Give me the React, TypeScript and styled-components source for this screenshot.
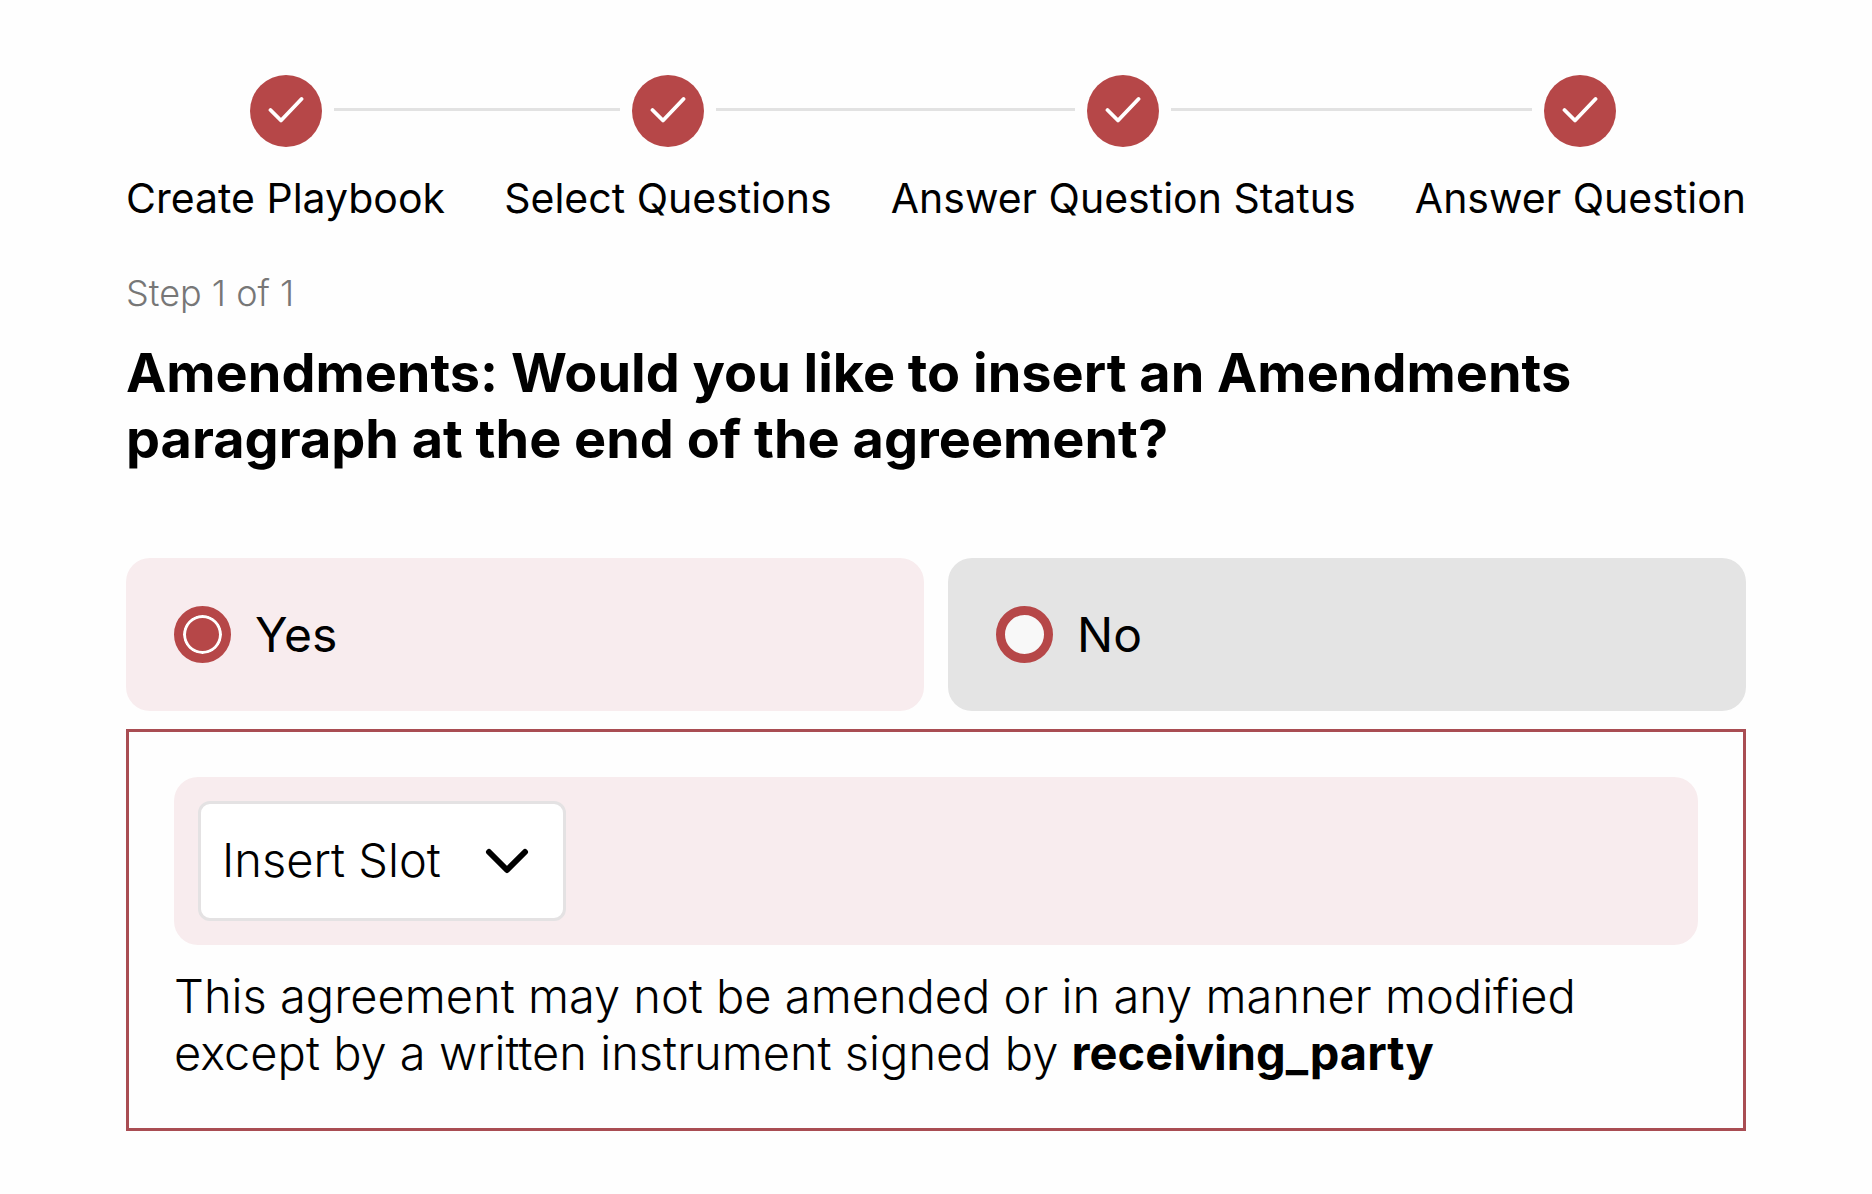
import React, { useState } from "react";
import styled, { createGlobalStyle } from "styled-components";

const red = "#b64748";
const blush = "#f8ecee";

const GlobalStyle = createGlobalStyle`
  *, *::before, *::after { box-sizing: border-box; }
  body {
    margin: 0;
    background: #fefefe;
    color: #000;
    font-family: Inter, "Liberation Sans", sans-serif;
  }
`;

const Page = styled.main`
  display: flex;
  flex-direction: column;
  padding: 75px 126px 63px;
`;

const Stepper = styled.ol`
  display: flex;
  justify-content: space-between;
  gap: 56px;
  margin: 0 0 45px;
  padding: 0;
  list-style: none;
`;

const Step = styled.li`
  display: flex;
  flex-direction: column;
  gap: 24px;
`;

const Track = styled.div`
  display: flex;
  align-items: center;
  gap: 12px;
`;

const Connector = styled.span<{ $side: "left" | "right"; $hidden: boolean }>`
  flex: 1;
  height: 3px;
  margin-bottom: 3px;
  margin-left: ${(p) => (p.$side === "left" ? "-30px" : "0")};
  margin-right: ${(p) => (p.$side === "right" ? "-30px" : "0")};
  background: #e2e2e2;
  visibility: ${(p) => (p.$hidden ? "hidden" : "visible")};
`;

const Badge = styled.span`
  display: grid;
  place-items: center;
  flex: none;
  width: 72px;
  height: 72px;
  padding-bottom: 3px;
  border-radius: 50%;
  background: ${red};
`;

const StepLabel = styled.span`
  font-size: 41px;
  font-weight: 400;
  line-height: 54px;
  white-space: nowrap;
`;

const Progress = styled.p`
  margin: 0 0 24px;
  color: #777;
  font-size: 36px;
  font-weight: 300;
  line-height: 46px;
`;

const Title = styled.h1`
  margin: 0 0 86px;
  font-size: 54px;
  font-weight: 700;
  line-height: 66px;
`;

const Choices = styled.div`
  display: grid;
  grid-template-columns: 1fr 1fr;
  gap: 24px;
  margin-bottom: 18px;
`;

const Choice = styled.label<{ $selected: boolean }>`
  display: flex;
  align-items: center;
  gap: 24px;
  padding: 48px;
  border-radius: 24px;
  background: ${(p) => (p.$selected ? blush : "#e4e4e4")};
  font-size: 48px;
  font-weight: 400;
  line-height: 56px;
  cursor: pointer;
`;

const Radio = styled.input`
  appearance: none;
  flex: none;
  width: 57px;
  height: 57px;
  margin: 0;
  border: 9px solid ${red};
  border-radius: 50%;
  background: #f8f8f8;

  &:checked {
    background: ${red};
    box-shadow: inset 0 0 0 3px #fff;
  }
`;

const Panel = styled.section`
  display: flex;
  flex-direction: column;
  gap: 22px;
  padding: 45px 45px 47px;
  border: 3px solid #a94d53;
`;

const Toolbar = styled.div`
  display: flex;
  padding: 24px;
  border-radius: 24px;
  background: ${blush};
`;

const SelectBox = styled.div`
  display: grid;
  align-items: center;
  justify-items: end;

  > * {
    grid-area: 1 / 1;
  }

  svg {
    margin-right: 37px;
    pointer-events: none;
  }
`;

const SlotSelect = styled.select`
  appearance: none;
  width: 368px;
  height: 120px;
  padding: 0 96px 4px 21px;
  border: 3px solid #e4e2e3;
  border-radius: 12px;
  background: #fff;
  color: #000;
  font-family: inherit;
  font-size: 47px;
  font-weight: 300;
`;

const Clause = styled.p`
  margin: 0;
  font-size: 47px;
  font-weight: 300;
  line-height: 57px;

  strong {
    font-weight: 700;
  }
`;

const CheckIcon = () => (
  <svg width="36" height="28" viewBox="0 0 36 28" fill="none" aria-hidden="true">
    <path
      d="M2.5 14 L13 24.5 L33.5 3"
      stroke="#fff"
      strokeWidth="3.8"
      strokeLinecap="round"
      strokeLinejoin="round"
    />
  </svg>
);

const ChevronIcon = () => (
  <svg width="44" height="26" viewBox="0 0 44 26" fill="none" aria-hidden="true">
    <path
      d="M4 4 L22 22 L40 4"
      stroke="#000"
      strokeWidth="6"
      strokeLinecap="round"
      strokeLinejoin="round"
    />
  </svg>
);

const steps = [
  "Create Playbook",
  "Select Questions",
  "Answer Question Status",
  "Answer Question",
];

const answers = ["Yes", "No"];

export default function App() {
  const [answer, setAnswer] = useState("Yes");

  return (
    <>
      <GlobalStyle />
      <Page>
        <Stepper>
          {steps.map((label, i) => (
            <Step key={label}>
              <Track>
                <Connector $side="left" $hidden={i === 0} />
                <Badge>
                  <CheckIcon />
                </Badge>
                <Connector $side="right" $hidden={i === steps.length - 1} />
              </Track>
              <StepLabel>{label}</StepLabel>
            </Step>
          ))}
        </Stepper>
        <Progress>Step 1 of 1</Progress>
        <Title id="question">
          Amendments: Would you like to insert an Amendments paragraph at the end
          of the agreement?
        </Title>
        <Choices role="radiogroup" aria-labelledby="question">
          {answers.map((value) => (
            <Choice key={value} htmlFor={value} $selected={answer === value}>
              <Radio
                id={value}
                type="radio"
                name="answer"
                value={value}
                checked={answer === value}
                onChange={() => setAnswer(value)}
              />
              {value}
            </Choice>
          ))}
        </Choices>
        <Panel>
          <Toolbar>
            <SelectBox>
              <SlotSelect aria-label="Insert Slot" defaultValue="slot">
                <option value="slot">Insert Slot</option>
              </SlotSelect>
              <ChevronIcon />
            </SelectBox>
          </Toolbar>
          <Clause>
            This agreement may not be amended or in any manner modified except by
            a written instrument signed by <strong>receiving_party</strong>
          </Clause>
        </Panel>
      </Page>
    </>
  );
}
